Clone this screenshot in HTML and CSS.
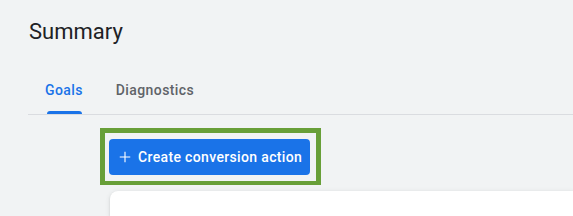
FILE: index.html
```html
<!DOCTYPE html>
<html lang="en">
<head>
<meta charset="utf-8">
<title>Summary</title>
<link rel="stylesheet" href="styles.css">
</head>
<body>
<main class="page">
  <h1 class="title">Summary</h1>
  <nav class="tabs">
    <a class="tab tab-active">Goals</a>
    <a class="tab">Diagnostics</a>
  </nav>
  <div class="content">
    <div class="highlight">
      <button class="btn-primary" type="button">
        <svg class="btn-icon" viewBox="0 0 24 24" width="18" height="18" aria-hidden="true"><path d="M19 12.75h-6.25V19h-1.5v-6.25H5v-1.5h6.25V5h1.5v6.25H19z" fill="currentColor"/></svg>
        <span>Create conversion action</span>
      </button>
    </div>
    <div class="card"></div>
  </div>
</main>
</body>
</html>
```
FILE: styles.css
```css
html, body {
  margin: 0;
  padding: 0;
  height: 100%;
}
body {
  background: #f1f3f4;
  font-family: Roboto, "Noto Sans", Arial, sans-serif;
  overflow: hidden;
}
.page {
  padding: 18px 0 0 28px;
}
.title {
  margin: 0 0 0 1px;
  font-size: 22px;
  font-weight: 400;
  line-height: 28px;
  color: #202124;
}
.tabs {
  margin-top: 20px;
  display: flex;
  height: 48px;
  border-bottom: 1px solid #dadce0;
}
.tab {
  position: relative;
  display: flex;
  align-items: center;
  padding: 0 16px 0 17px;
  font-size: 14px;
  font-weight: 500;
  color: #5f6368;
  letter-spacing: 0.4px;
}
.tab-active {
  color: #1a73e8;
}
.tab-active::after {
  content: "";
  position: absolute;
  left: 19px;
  right: 17px;
  bottom: 0;
  height: 3px;
  background: #1a73e8;
  border-radius: 3px 3px 0 0;
}
.content {
  padding: 13px 0 0 72px;
}
.highlight {
  display: inline-flex;
  border: 5px solid #689f38;
  border-bottom-width: 4px;
  padding: 6px 6px 6px 4px;
}
.btn-primary {
  display: flex;
  align-items: center;
  gap: 4px;
  height: 36px;
  padding: 0 8px 0 7px;
  border: none;
  border-radius: 4px;
  background: #1a73e8;
  color: #fff;
  font-family: Roboto, "Noto Sans", Arial, sans-serif;
  font-size: 14px;
  font-weight: 500;
  letter-spacing: 0.35px;
}
.btn-icon {
  display: block;
}
.card {
  margin: 6px 0 0 10px;
  height: 25px;
  background: #fff;
  border-radius: 8px 0 0 0;
  box-shadow: 0 1px 2px rgba(60, 64, 67, 0.15), 0 1px 4px 1px rgba(60, 64, 67, 0.08);
}
```
